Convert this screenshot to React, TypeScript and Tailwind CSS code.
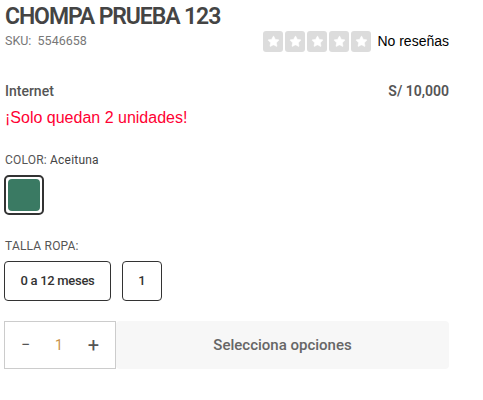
import { Star } from "lucide-react";

function Stars() {
  return (
    <div className="flex gap-[2px]">
      {[0, 1, 2, 3, 4].map((i) => (
        <span
          key={i}
          className="flex h-[21px] w-[20px] items-center justify-center rounded-[3px] bg-[#dcdcdc]"
        >
          <Star size={13} fill="#ffffff" stroke="#ffffff" strokeWidth={1} />
        </span>
      ))}
    </div>
  );
}

export default function App() {
  return (
    <div className="w-[483px] bg-white pl-[4px] pr-[34px] pt-[3px] font-['Roboto',sans-serif]">
      <h1 className="pl-[1px] text-[23px] font-semibold leading-[28px] tracking-[-1.1px] text-[#444]">
        CHOMPA PRUEBA 123
      </h1>
      <div className="flex items-center justify-between">
        <span className="pl-[1px] text-[12.5px] text-[#777]">SKU:&nbsp; 5546658</span>
        <div className="flex items-center gap-[6px]">
          <Stars />
          <span className="font-['Liberation_Sans',Arial,sans-serif] text-[14px] text-black">
            No reseñas
          </span>
        </div>
      </div>

      <div className="mt-[29px] flex items-center justify-between pl-[1px] text-[14px] font-medium text-[#555]">
        <span>Internet</span>
        <span className="font-semibold">S/ 10,000</span>
      </div>
      <p className="pl-[1px] pt-[6px] font-['Liberation_Sans',Arial,sans-serif] text-[16px] leading-[20px] text-[#ff0033]">
        ¡Solo quedan 2 unidades!
      </p>

      <div className="mt-[23px] pl-[1px] text-[12px] tracking-[0.2px] text-[#555]">
        COLOR: <span className="text-[#444]">Aceituna</span>
      </div>
      <div className="mt-[6px] flex">
        <div className="rounded-[5px] border-2 border-[#333] p-[2px]">
          <div className="h-[32px] w-[32px] rounded-[4px] bg-[#3a7a63]" />
        </div>
      </div>

      <div className="mt-[22px] pl-[1px] text-[12px] tracking-[0.2px] text-[#555]">TALLA ROPA:</div>
      <div className="mt-[6px] flex gap-[11px]">
        <button className="h-[40px] w-[107px] rounded-[4px] border border-[#333] text-[13px] font-medium tracking-[-0.3px] text-[#333]">
          0 a 12 meses
        </button>
        <button className="h-[40px] w-[40px] rounded-[4px] border border-[#333] text-[13px] font-medium text-[#333]">
          1
        </button>
      </div>

      <div className="mt-[20px] flex h-[48px]">
        <div className="flex w-[112px] items-center justify-between border border-[#ccc] px-[16px] text-[16px] text-[#555]">
          <span>−</span>
          <span className="text-[14px] text-[#c8924a]">1</span>
          <span className="text-[20px]">+</span>
        </div>
        <button className="flex-1 rounded-[4px] bg-[#f7f7f7] text-[15px] font-medium text-[#666]">
          Selecciona opciones
        </button>
      </div>
      <div className="h-[32px]" />
    </div>
  );
}
